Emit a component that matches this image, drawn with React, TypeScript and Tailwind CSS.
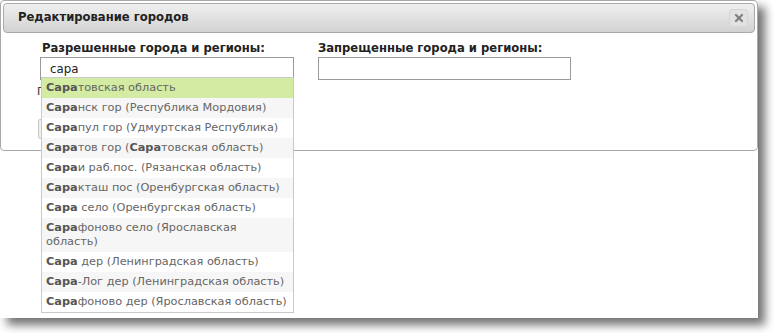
import { X } from "lucide-react";

const results = [
  { hit: "Сара", rest: "товская область" },
  { hit: "Сара", rest: "нск гор (Республика Мордовия)" },
  { hit: "Сара", rest: "пул гор (Удмуртская Республика)" },
  { hit: "Сара", rest: "тов гор (", hit2: "Сара", rest2: "товская область)" },
  { hit: "Сара", rest: "и раб.пос. (Рязанская область)" },
  { hit: "Сара", rest: "кташ пос (Оренбургская область)" },
  { hit: "Сара", rest: " село (Оренбургская область)" },
  { hit: "Сара", rest: "фоново село (Ярославская область)" },
  { hit: "Сара", rest: " дер (Ленинградская область)" },
  { hit: "Сара", rest: "-Лог дер (Ленинградская область)" },
  { hit: "Сара", rest: "фоново дер (Ярославская область)" },
];

const App = () => {
  return (
    <div className="relative w-[774px] h-[333px] bg-white overflow-hidden font-['DejaVu_Sans',Verdana,sans-serif]">
      {/* captured window */}
      <div className="w-[758px] h-[318px] bg-white shadow-[7px_7px_9px_rgba(0,0,0,0.55)]">
        {/* Dialog */}
        <div className="h-[151px] border border-[#a9a9a9] rounded-[4px] p-[2px] bg-white">
          <div className="flex items-center justify-between h-[30px] border border-[#aaaaaa] rounded-[4px] bg-gradient-to-b from-[#f0f0f0] to-[#d2d2d2] pl-[14px] pr-[6px]">
            <span className="text-[11.6px] font-bold text-[#222]">
              Редактирование городов
            </span>
            <button className="flex items-center justify-center w-[19px] h-[18px] rounded-[3px] bg-[#e2e2e2] border border-[#d6d6d6]">
              <X size={12} strokeWidth={4.5} className="text-[#808080]" />
            </button>
          </div>

          <div className="flex gap-[24px] pl-[37px] pt-[8px]">
            <div className="flex flex-col w-[254px]">
              <label className="text-[11.6px] font-bold text-[#222] leading-[15px] pl-[2px]">
                Разрешенные города и регионы:
              </label>
              <input
                readOnly
                value="сара"
                className="mt-[1px] h-[23px] border border-[#9a9a9a] px-[9px] text-[11.8px] text-[#222] outline-none"
              />
              <div className="mt-[5px] -ml-[3px] text-[11px] text-[#333] leading-[14px]">
                Показать выбранные
              </div>
              <button className="mt-[20px] -ml-[2px] w-[90px] h-[20px] border border-[#c8c8c8] rounded-[2px] bg-[#eeeeee]" />
            </div>
            <div className="flex flex-col w-[253px]">
              <label className="text-[11.6px] font-bold text-[#222] leading-[15px]">
                Запрещенные города и регионы:
              </label>
              <input
                readOnly
                className="mt-[1px] h-[23px] border border-[#9a9a9a] px-[9px] text-[11.8px] outline-none"
              />
            </div>
          </div>
        </div>
      </div>

      {/* autocomplete dropdown */}
      <ul className="absolute left-[41px] top-[77px] w-[253px] border border-[#c9c9c9] bg-white">
        {results.map((r, i) => (
          <li
            key={i}
            className={`pl-[4px] pr-[4px] py-[3px] text-[11.3px] leading-[14px] text-[#666] ${
              i === 0 ? "bg-[#d3eba3]" : i % 2 === 1 ? "bg-[#f6f6f6]" : "bg-white"
            }`}
          >
            <b className="text-[#555]">{r.hit}</b>
            {r.rest}
            {r.hit2 && <b className="text-[#555]">{r.hit2}</b>}
            {r.rest2}
          </li>
        ))}
      </ul>
    </div>
  );
};

export default App;
